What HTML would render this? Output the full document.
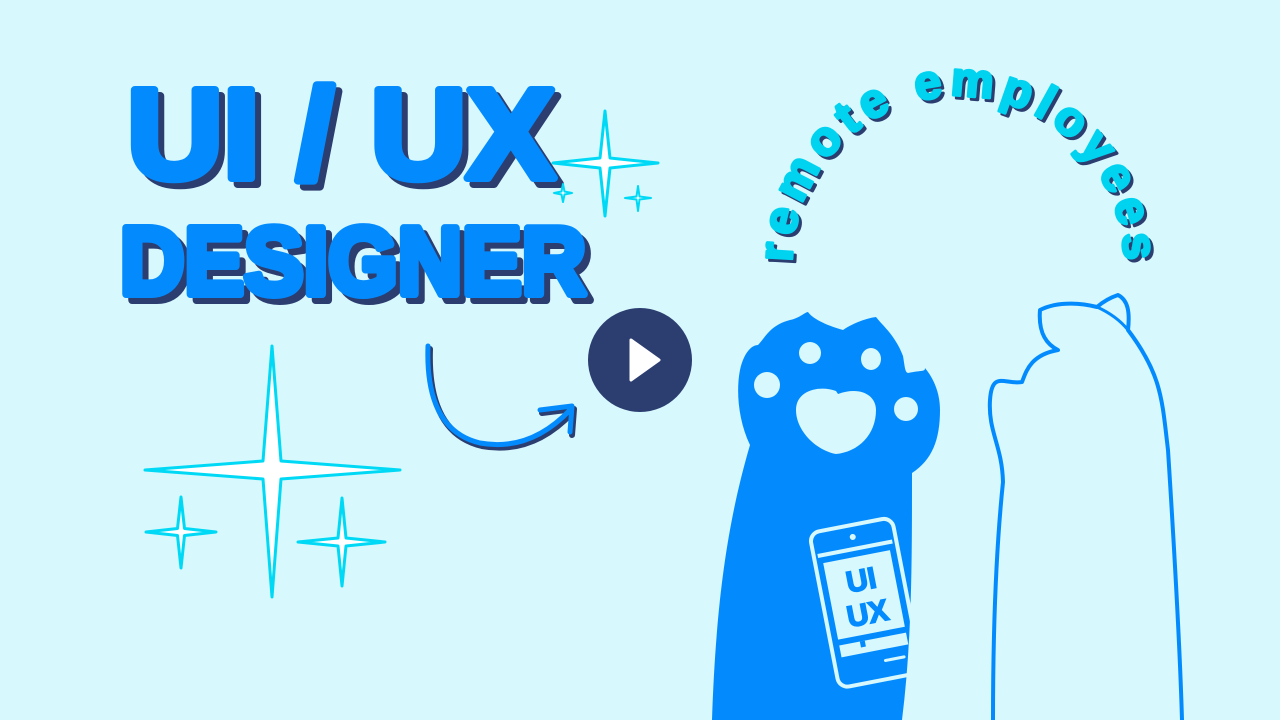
<!DOCTYPE html>
<html><head><meta charset="utf-8"><style>
html,body{margin:0;padding:0;width:1280px;height:720px;overflow:hidden;background:#d7f8fd}
svg{display:block}
</style></head><body>
<svg width="1280" height="720" viewBox="0 0 1280 720" xmlns="http://www.w3.org/2000/svg">
<rect width="1280" height="720" fill="#d7f8fd"/>
<defs>
<path id="arc" d="M792 262 A166 166 0 0 1 1124 262"/>
</defs>
<!-- Title text -->
<g font-family="'Liberation Sans',sans-serif" font-weight="bold" stroke-linejoin="round">
 <g transform="translate(6,6)" fill="#2c3d70" stroke="#2c3d70" stroke-width="8">
  <text x="127" y="178" font-size="128" textLength="428" lengthAdjust="spacingAndGlyphs">UI / UX</text>
  <text x="120" y="294" font-size="96" textLength="466" lengthAdjust="spacingAndGlyphs">DESIGNER</text>
 </g>
 <g fill="#038bfe" stroke="#038bfe" stroke-width="8">
  <text x="127" y="178" font-size="128" textLength="428" lengthAdjust="spacingAndGlyphs">UI / UX</text>
  <text x="120" y="294" font-size="96" textLength="466" lengthAdjust="spacingAndGlyphs">DESIGNER</text>
 </g>
</g>
<!-- sparkles -->
<g fill="#fff" stroke="#00d9f5" stroke-width="3" stroke-linejoin="round">
 <path d="M272 346 L281 461 L400 470 L281 479 L272 597 L263 479 L145 470 L263 461Z"/>
 <path d="M181 497 L184.5 528.5 L216 532 L184.5 535.5 L181 568 L177.5 535.5 L146 532 L177.5 528.5Z"/>
 <path d="M342 498 L346 538 L385 542 L346 546 L342 586 L338 546 L298 542 L338 538Z"/>
 <path d="M605 111 L610 158 L658 163 L610 168 L605 216 L600 168 L553 163 L600 158Z"/>
 <path d="M563 184 L564.5 191.5 L572 193 L564.5 194.5 L563 202 L561.5 194.5 L554 193 L561.5 191.5Z" stroke-width="2"/>
 <path d="M638 186 L639.5 196.5 L651 198 L639.5 199.5 L638 211 L636.5 199.5 L625 198 L636.5 196.5Z" stroke-width="2"/>
</g>
<!-- arrow -->
<g fill="none" stroke-linecap="round" stroke-linejoin="round">
 <path d="M428 346 Q425 430 480 443 Q530 452 570 410 M540 410 L572 406 L570 432" stroke="#2c3d70" stroke-width="6" transform="translate(2,3)"/>
 <path d="M428 346 Q425 430 480 443 Q530 452 570 410 M540 410 L572 406 L570 432" stroke="#038bfe" stroke-width="5"/>
</g>
<!-- play -->
<circle cx="640" cy="360" r="52" fill="#2c3d70"/>
<path d="M631 340 L659 360 L631 380Z" fill="#fff" stroke="#fff" stroke-width="3" stroke-linejoin="round"/>
<!-- curved text -->
<g font-family="'Liberation Sans',sans-serif" font-weight="bold" font-size="48" stroke-linejoin="round">
 <text fill="#2c3d70" stroke="#2c3d70" stroke-width="3" transform="translate(3,3)"><textPath href="#arc" textLength="520" lengthAdjust="spacing">remote employees</textPath></text>
 <text fill="#00d3f0" stroke="#00d3f0" stroke-width="3"><textPath href="#arc" textLength="520" lengthAdjust="spacing">remote employees</textPath></text>
</g>
<!-- left paw -->
<path fill="#038bfe" d="M712 720 C716 600 728 520 750 445 C738 420 736 390 740 370 C744 352 752 345 758 345 C765 338 770 325 790 320 C800 318 805 312 808 312 C812 318 825 325 843 330 C855 322 868 318 876 317 C882 325 895 335 903 356 C905 368 905 372 908 373 C922 370 925 372 925 368 C935 380 940 395 940 410 C940 440 932 460 912 473 C912 560 912 640 902 720Z"/>
<g fill="#d7f8fd">
 <circle cx="767" cy="385" r="13"/><circle cx="810" cy="353" r="11"/>
 <ellipse cx="871" cy="359" rx="10" ry="11"/><circle cx="906" cy="409" r="12"/>
 <path d="M836 391 C820 385 796 390 796 410 C796 430 815 450 836 454 C858 452 876 435 876 410 C876 395 860 386 838 394Z"/>
</g>
<!-- phone -->
<g transform="rotate(-11 864 600)">
 <rect x="823" y="524" width="84" height="158" rx="10" fill="none" stroke="#d7f8fd" stroke-width="4"/>
 <rect x="827" y="546" width="76" height="4" fill="#d7f8fd"/>
 <circle cx="865" cy="536" r="3" fill="#d7f8fd"/>
 <rect x="831" y="556" width="68" height="78" fill="#d7f8fd"/>
 <rect x="831" y="640" width="68" height="12" fill="#d7f8fd"/>
 <rect x="852" y="640" width="5" height="6" fill="#038bfe"/>
 <rect x="872" y="662" width="22" height="3" rx="1.5" fill="#d7f8fd"/>
 <text x="865" y="590" font-family="'Liberation Sans',sans-serif" font-weight="bold" font-size="30" fill="#038bfe" stroke="#038bfe" stroke-width="1.5" text-anchor="middle">UI</text>
 <text x="865" y="624" font-family="'Liberation Sans',sans-serif" font-weight="bold" font-size="30" fill="#038bfe" stroke="#038bfe" stroke-width="1.5" text-anchor="middle">UX</text>
</g>
<!-- right paw outline -->
<path fill="none" stroke="#038bfe" stroke-width="4" stroke-linejoin="round" d="M993 720 C993 620 997 540 1003 482 C1002 445 988 432 990 400 C992 370 1005 385 1022 382 C1026 372 1030 355 1058 350 C1048 345 1038 335 1040 310 C1060 300 1085 304 1097 307 C1105 300 1112 297 1118 295 C1128 300 1130 312 1128 330 C1162 375 1162 400 1168 450 C1175 560 1180 650 1182 720"/>
<path fill="none" stroke="#038bfe" stroke-width="3" d="M1097 307 C1108 312 1120 320 1128 330"/>
</svg>
</body></html>
